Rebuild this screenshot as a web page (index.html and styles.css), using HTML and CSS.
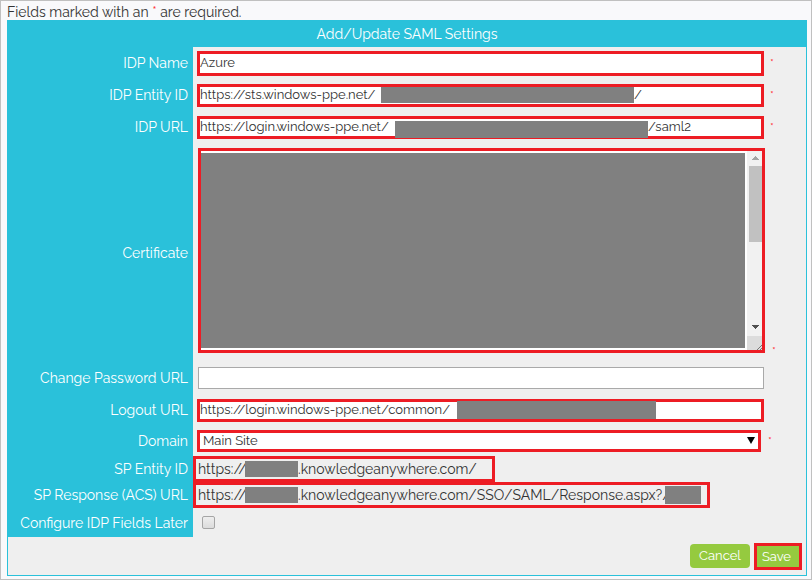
FILE: index.html
```html
<!DOCTYPE html>
<html lang="en">
<head>
<meta charset="utf-8">
<title>Add/Update SAML Settings</title>
<link rel="stylesheet" href="styles.css">
</head>
<body>
<p class="note">Fields marked with an <span class="star">*</span> are required.</p>
<form class="panel">
  <h1 class="title">Add/Update SAML Settings</h1>
  <div class="row">
    <label class="label" for="name">IDP Name</label>
    <div class="cell"><div class="box tall"><input class="text" id="name" value="Azure"></div><span class="req">*</span></div>
  </div>
  <div class="row">
    <label class="label" for="entity">IDP Entity ID</label>
    <div class="cell"><div class="box"><input class="text entity" id="entity" value="https://sts.windows-ppe.net/"><span class="mask wide"></span><span>/</span></div><span class="req">*</span></div>
  </div>
  <div class="row">
    <label class="label" for="url">IDP URL</label>
    <div class="cell"><div class="box"><input class="text login" id="url" value="https://login.windows-ppe.net/"><span class="mask wide low"></span><span>/saml2</span></div><span class="req">*</span></div>
  </div>
  <div class="row cert">
    <label class="label" for="cert">Certificate</label>
    <div class="cell">
      <div class="box area">
        <textarea class="masked" id="cert"></textarea>
        <svg class="scroll" width="15" height="199" viewBox="0 0 15 199" aria-hidden="true">
          <path fill="#f1f1f1" d="M0 0h15v185H0z"/><path fill="#dcdcdc" d="M0 185h15v14H0z"/>
          <path fill="#c1c1c1" d="M2 15h13v76H2z"/>
          <path fill="#a3a3a3" d="M8 5h1v1h1v1h1v1h1v1H5V8h1V7h1V6h1z"/>
          <path fill="#505050" d="M5 174h7v1h-1v1h-1v1H9v1H8v-1H7v-1H6v-1H5z"/>
          <path stroke="#777" fill="none" d="M10 199l5-5M13 199l2-2"/>
        </svg>
      </div><span class="req">*</span>
    </div>
  </div>
  <div class="row">
    <label class="label" for="change">Change Password URL</label>
    <div class="cell"><div class="box plain"><input class="text" id="change"></div><span class="req"></span></div>
  </div>
  <div class="row">
    <label class="label" for="logout">Logout URL</label>
    <div class="cell"><div class="box"><input class="text logout" id="logout" value="https://login.windows-ppe.net/common/"><span class="mask medium"></span></div><span class="req"></span></div>
  </div>
  <div class="row medium-row">
    <label class="label" for="domain">Domain</label>
    <div class="cell"><div class="box domain"><select class="select" id="domain"><option>Main Site</option></select><svg class="arrow" width="8" height="7" viewBox="0 0 8 7" aria-hidden="true"><path d="M0 0h8L4 7z"/></svg></div><span class="req">*</span></div>
  </div>
  <div class="row short">
    <span class="label">SP Entity ID</span>
    <div class="cell flush"><div class="value first"><span class="scheme">https://</span><span class="mask host"></span><span>.knowledgeanywhere.com/</span></div></div>
  </div>
  <div class="row short">
    <span class="label">SP Response (ACS) URL</span>
    <div class="cell flush"><div class="value second"><span class="scheme">https://</span><span class="mask host"></span><span class="path">.knowledgeanywhere.com/SSO/SAML/Response.aspx?/</span><span class="mask query"></span></div></div>
  </div>
  <div class="row last">
    <label class="label" for="later">Configure IDP Fields Later</label>
    <div class="cell"><input class="check" type="checkbox" id="later"></div>
  </div>
  <div class="actions">
    <button class="button" type="button">Cancel</button>
    <button class="button save" type="button">Save</button>
  </div>
</form>
</body>
</html>
```

FILE: styles.css
```css
* { box-sizing: border-box; }
body {
  margin: 0;
  min-height: 100vh;
  padding: 3px 4px 3px 6px;
  border: 1px solid #c0c0c0;
  background: #f9f9fb;
  color: #333;
  font: 14px/16px Raleway, Lato, sans-serif;
}
.note { margin: 0; }
.star, .req { color: #f33; }
.panel { border: 1px solid #2ac1da; background: #efefef; }
.title {
  margin: 0;
  background: #2ac1da;
  color: #fff;
  font-size: 14px;
  font-weight: 400;
  line-height: 26px;
  text-align: center;
}
.row { display: flex; height: 32px; }
.cert { height: 219px; }
.medium-row { height: 30px; }
.short { height: 26px; }
.last { height: 29px; }
.label {
  display: flex;
  flex: 0 0 185px;
  align-items: center;
  justify-content: flex-end;
  padding-right: 5px;
  background: #2ac1da;
  color: #fff;
}
.cell { display: flex; flex: 1; align-items: center; min-width: 0; padding-left: 4px; }
.cert .cell { padding-bottom: 4px; }
.flush { padding-left: 0; }
.box {
  position: relative;
  display: flex;
  flex: 1;
  align-items: center;
  height: 23px;
  border: 3px solid #ed1c24;
  background: #fff;
  font-size: 13px;
}
.tall { height: 25px; }
.plain { height: 22px; margin-left: 1px; border: 1px solid #a9a9a9; }
.text {
  flex: 1;
  min-width: 0;
  height: 16px;
  padding: 0;
  border: 0;
  outline: 0;
  background: transparent;
  color: #333;
  font: inherit;
}
.entity { flex: 0 0 181px; }
.login { flex: 0 0 195px; }
.logout { flex: 0 0 257px; }
.mask { z-index: 1; flex: none; height: 16px; background: #808080; }
.wide { width: 253px; }
.low { align-self: flex-start; height: 17px; margin-top: 2px; }
.medium { width: 199px; height: 18px; }
.req { flex: 0 0 42px; height: 14px; padding-left: 6px; font-size: 12px; line-height: 14px; }
.area { height: 205px; margin-left: 1px; }
.area + .req { align-self: flex-end; padding-left: 7px; flex-basis: 41px; }
.masked {
  flex: 1;
  height: 195px;
  margin-right: 2px;
  padding: 0;
  border: 0;
  resize: none;
  background: #808080;
}
.scroll { flex: none; }
.domain { height: 22px; }
.domain + .req { flex-basis: 45px; padding-left: 7px; }
.select {
  flex: 1;
  height: 16px;
  padding: 0 0 0 3px;
  border: 0;
  appearance: none;
  background: transparent;
  color: #333;
  font: inherit;
}
.arrow { position: absolute; top: 4px; right: 3px; pointer-events: none; }
.value {
  display: flex;
  align-items: center;
  height: 26px;
  padding-left: 2px;
  border: 3px solid #ed1c24;
}
.first { width: 302px; }
.second { width: 517px; }
.scheme { flex: 0 0 47px; min-width: 0; }
.host { width: 53px; }
.path { flex: 0 0 367px; min-width: 0; }
.query { width: 36px; height: 18px; }
.check {
  appearance: none;
  width: 13px;
  height: 13px;
  margin: 0 0 0 5px;
  border: 1px solid #a5a5a5;
  border-radius: 2px;
  background: linear-gradient(#eee, #dcdcdc);
}
.check:checked { background: #2ac1da; }
.actions { display: flex; justify-content: flex-end; align-items: center; gap: 4px; height: 38px; padding: 0 4px; }
.button {
  height: 24px;
  padding: 0 9px;
  border: 0;
  border-radius: 4px;
  background: #95ca3f;
  color: #fff;
  font: 13px/24px Raleway, Lato, sans-serif;
}
.save { height: 27px; padding: 0 8px 0 5px; border: 3px solid #ed1c24; border-radius: 0; line-height: 21px; }
```
